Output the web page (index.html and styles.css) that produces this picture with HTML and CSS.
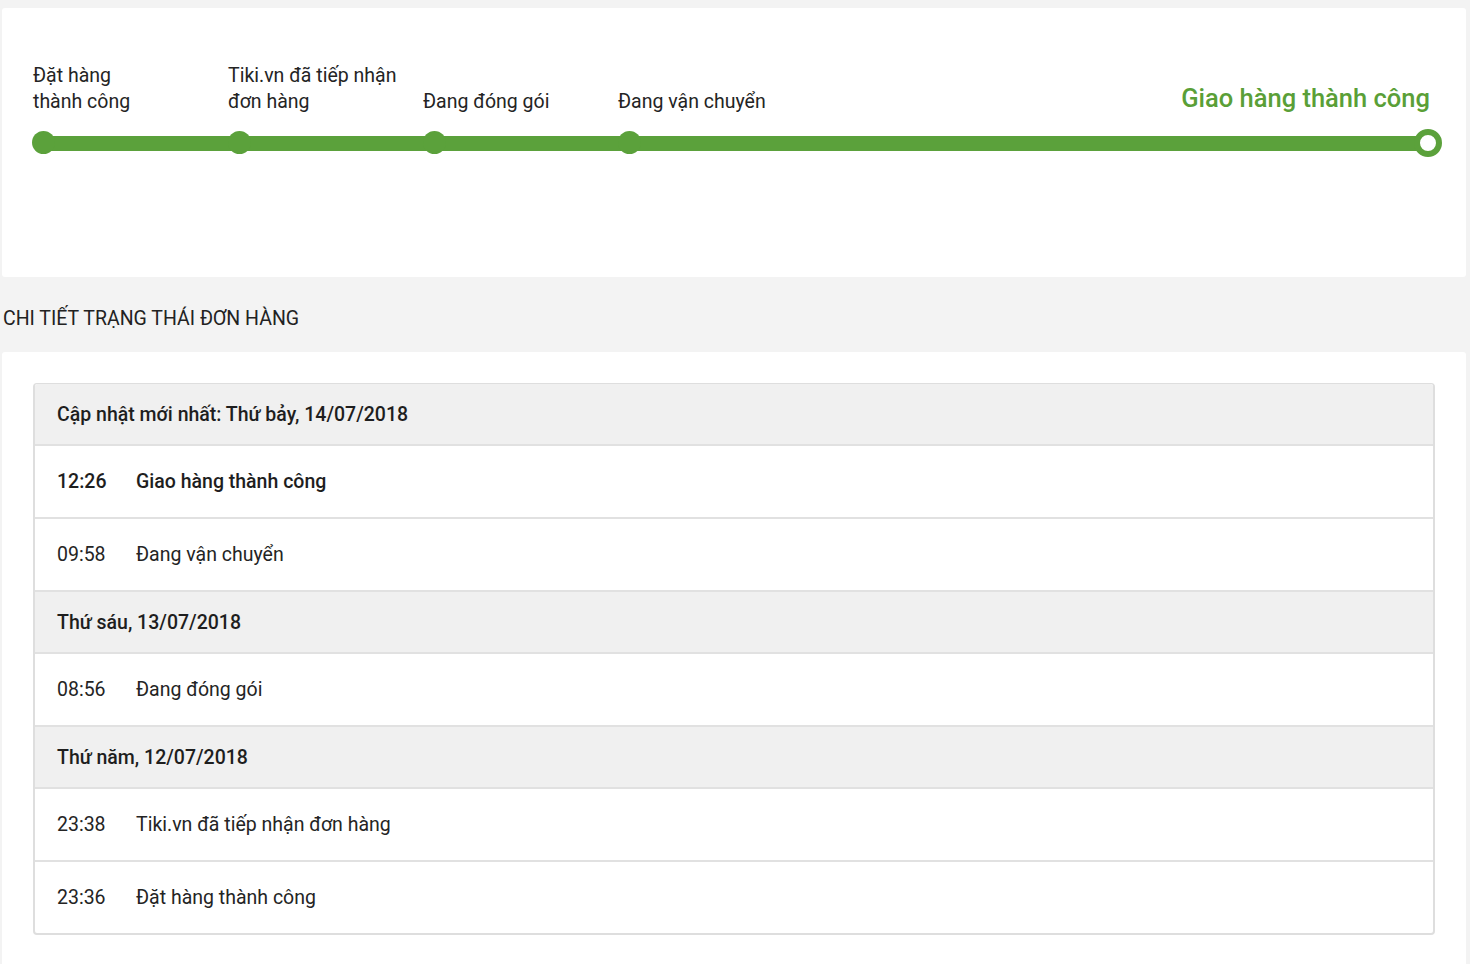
FILE: index.html
```html
<!DOCTYPE html>
<html lang="vi">
<head>
<meta charset="utf-8">
<title>Trạng thái đơn hàng</title>
<link rel="stylesheet" href="styles.css">
</head>
<body>
  <section class="card progress-card">
    <div class="steps">
      <div class="step">
        <div class="step-label">Đặt hàng<br>thành công</div>
        <span class="dot"></span>
      </div>
      <div class="step">
        <div class="step-label">Tiki.vn đã tiếp nhận<br>đơn hàng</div>
        <span class="dot"></span>
      </div>
      <div class="step">
        <div class="step-label">Đang đóng gói</div>
        <span class="dot"></span>
      </div>
      <div class="step">
        <div class="step-label">Đang vận chuyển</div>
        <span class="dot"></span>
      </div>
      <div class="step step-current">
        <div class="step-label">Giao hàng thành công</div>
        <span class="dot ring"></span>
      </div>
    </div>
  </section>

  <h2 class="section-title">CHI TIẾT TRẠNG THÁI ĐƠN HÀNG</h2>

  <section class="card detail-card">
    <div class="status-table">
      <div class="day-row">Cập nhật mới nhất: Thứ bảy, 14/07/2018</div>
      <div class="event-row event-latest"><span class="time">12:26</span><span class="desc">Giao hàng thành công</span></div>
      <div class="event-row"><span class="time">09:58</span><span class="desc">Đang vận chuyển</span></div>
      <div class="day-row">Thứ sáu, 13/07/2018</div>
      <div class="event-row"><span class="time">08:56</span><span class="desc">Đang đóng gói</span></div>
      <div class="day-row">Thứ năm, 12/07/2018</div>
      <div class="event-row"><span class="time">23:38</span><span class="desc">Tiki.vn đã tiếp nhận đơn hàng</span></div>
      <div class="event-row"><span class="time">23:36</span><span class="desc">Đặt hàng thành công</span></div>
    </div>
  </section>
</body>
</html>
```

FILE: styles.css
```css
* { box-sizing: border-box; }

html, body { height: 100%; }

body {
  margin: 0;
  padding: 8px 4px 0 2px;
  background: #f3f3f3;
  font-family: Roboto, "Noto Sans", "Liberation Sans", sans-serif;
  font-size: 19.5px;
  color: #242424;
  overflow: hidden;
}

.card {
  background: #fff;
  border-radius: 3px;
}

/* ---------- progress ---------- */
.progress-card {
  padding: 55px 24px 120px 31px;
}

.steps {
  display: flex;
  align-items: flex-end;
  background-image: linear-gradient(#5ba13b, #5ba13b);
  background-repeat: no-repeat;
  background-size: calc(100% - 25px) 15px;
  background-position: left 11px bottom 6px;
}

.step {
  width: 195px;
  display: flex;
  flex-direction: column;
  align-items: flex-start;
}

.step-label {
  line-height: 26px;
  color: #242424;
  margin-bottom: 16px;
}

.dot {
  width: 23px;
  height: 23px;
  border-radius: 50%;
  background: #5ba13b;
  margin: 0 0 3px 0;
}

.step:first-child .dot { margin-left: -1px; }

.step-current {
  width: auto;
  margin-left: auto;
  align-items: flex-end;
}

.step-current .step-label {
  font-size: 25.5px;
  font-weight: 500;
  line-height: 34px;
  color: #5a9f37;
  margin: 0 12px 14px 0;
}

.dot.ring {
  width: 28px;
  height: 28px;
  margin: 0;
  background: #fff;
  border: 6px solid #5ba13b;
}

/* ---------- heading ---------- */
.section-title {
  margin: 0;
  padding: 29px 0 20px 1px;
  font-size: 19.5px;
  line-height: 26px;
  font-weight: 400;
  color: #222;
}

/* ---------- detail table ---------- */
.detail-card {
  padding: 31px 31px 40px 31px;
  min-height: 620px;
}

.status-table {
  border: 2px solid #dedede;
  border-top-width: 1px;
  border-radius: 4px;
  overflow: hidden;
}

.day-row,
.event-row {
  line-height: 26px;
  padding: 23px 22px 22px;
  border-bottom: 2px solid #e1e1e1;
}

.status-table > :last-child { border-bottom: 0; }

.day-row {
  background: #f0f0f0;
  padding-top: 18px;
  padding-bottom: 16px;
  font-weight: 500;
  color: #1e1e1e;
}

.event-row {
  display: flex;
  color: #242424;
}

.time {
  width: 79px;
  flex: none;
}

.event-latest {
  font-weight: 500;
  color: #1e1e1e;
}
```
